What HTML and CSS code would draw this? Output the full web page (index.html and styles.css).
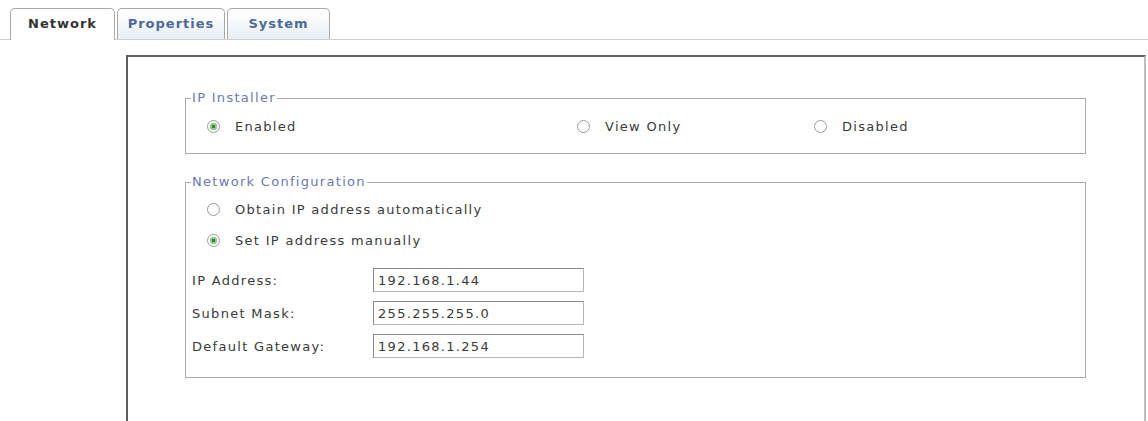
FILE: index.html
```html
<!DOCTYPE html>
<html lang="en">
<head>
    <meta charset="UTF-8">
    <title>Network</title>
    <link rel="stylesheet" href="styles.css">
</head>
<body>
    <div class="tabs">
        <div class="tab tab-active tab-network">Network</div>
        <div class="tab tab-properties">Properties</div>
        <div class="tab tab-system">System</div>
    </div>

    <div class="panel">
        <fieldset class="group">
            <legend>IP Installer</legend>
            <div class="choice-row">
                <label class="choice"><input type="radio" name="installer" checked> Enabled</label>
                <label class="choice"><input type="radio" name="installer"> View Only</label>
                <label class="choice"><input type="radio" name="installer"> Disabled</label>
            </div>
        </fieldset>

        <fieldset class="group group-net">
            <legend>Network Configuration</legend>
            <div class="line">
                <label class="choice"><input type="radio" name="mode"> Obtain IP address automatically</label>
            </div>
            <div class="line">
                <label class="choice"><input type="radio" name="mode" checked> Set IP address manually</label>
            </div>
            <div class="field first">
                <label for="ip">IP Address:</label>
                <input type="text" id="ip" value="192.168.1.44">
            </div>
            <div class="field">
                <label for="mask">Subnet Mask:</label>
                <input type="text" id="mask" value="255.255.255.0">
            </div>
            <div class="field">
                <label for="gw">Default Gateway:</label>
                <input type="text" id="gw" value="192.168.1.254">
            </div>
        </fieldset>
    </div>
</body>
</html>
```

FILE: styles.css
```css
body {
    margin: 0;
    background: #fff;
    font-family: "DejaVu Sans", Verdana, sans-serif;
    font-size: 13px;
    letter-spacing: 1.3px;
    color: #3a3a3a;
    overflow: hidden;
}

/* tabs */
.tabs {
    display: flex;
    align-items: flex-end;
    height: 39px;
    padding-left: 10px;
    border-bottom: 1px solid #cfcfcf;
}

.tab {
    height: 30px;
    line-height: 30px;
    margin-right: 2px;
    border: 1px solid #a8a8a8;
    border-bottom: none;
    border-radius: 5px 5px 0 0;
    text-align: center;
    font-weight: bold;
    letter-spacing: 1px;
    color: #4b6a96;
    background: linear-gradient(#ffffff, #e9eff5);
}

.tab-active {
    color: #333;
    background: #fff;
    margin-bottom: -1px;
    height: 31px;
}

.tab-network { width: 103px; }
.tab-properties { width: 106px; }
.tab-system { width: 101px; }

/* main panel */
.panel {
    box-sizing: border-box;
    margin: 15px 0 0 126px;
    width: 1020px;
    height: 366px;
    border: 2px solid;
    border-bottom: none;
    border-color: #5e5e5e #bdbdbd #bdbdbd #5e5e5e;
    padding: 33px 0 0 57px;
}

.group {
    width: 899px;
    margin: 0;
    padding: 8px 0 15px 0;
    border: 1px solid #ababab;
    box-sizing: content-box;
}

.group legend {
    margin-left: 5px;
    padding: 0 1px;
    line-height: 16px;
    color: #6a78b0;
}

.group-net {
    margin-top: 20px;
    padding-top: 7px;
    padding-bottom: 19px;
}

.choice-row {
    display: grid;
    grid-template-columns: 370px 237px auto;
    padding-left: 21px;
    height: 24px;
    align-items: center;
}

.line {
    height: 24px;
    display: flex;
    align-items: center;
    padding-left: 21px;
    margin-bottom: 7px;
}

.choice {
    display: flex;
    align-items: center;
}

input[type="radio"] {
    appearance: none;
    width: 13px;
    height: 13px;
    margin: 0 15px 0 0;
    border: 1px solid #9b9b9b;
    border-radius: 50%;
    background: #fff;
}

input[type="radio"]:checked {
    background: radial-gradient(circle, #3f7d3f 0 1.5px, #8ccc8c 2px 3.5px, #fff 4px);
}

.field {
    display: flex;
    align-items: center;
    margin-top: 9px;
}

.field.first {
    margin-top: 16px;
}

.field label {
    width: 181px;
    padding-left: 6px;
}

input[type="text"] {
    width: 211px;
    height: 24px;
    box-sizing: border-box;
    margin: 0;
    padding: 0 4px;
    border: 1px solid #9c9c9c;
    border-color: #8a8a8a #b5b5b5 #b5b5b5 #8a8a8a;
    font: inherit;
    letter-spacing: inherit;
    color: #3a3a3a;
}
```
